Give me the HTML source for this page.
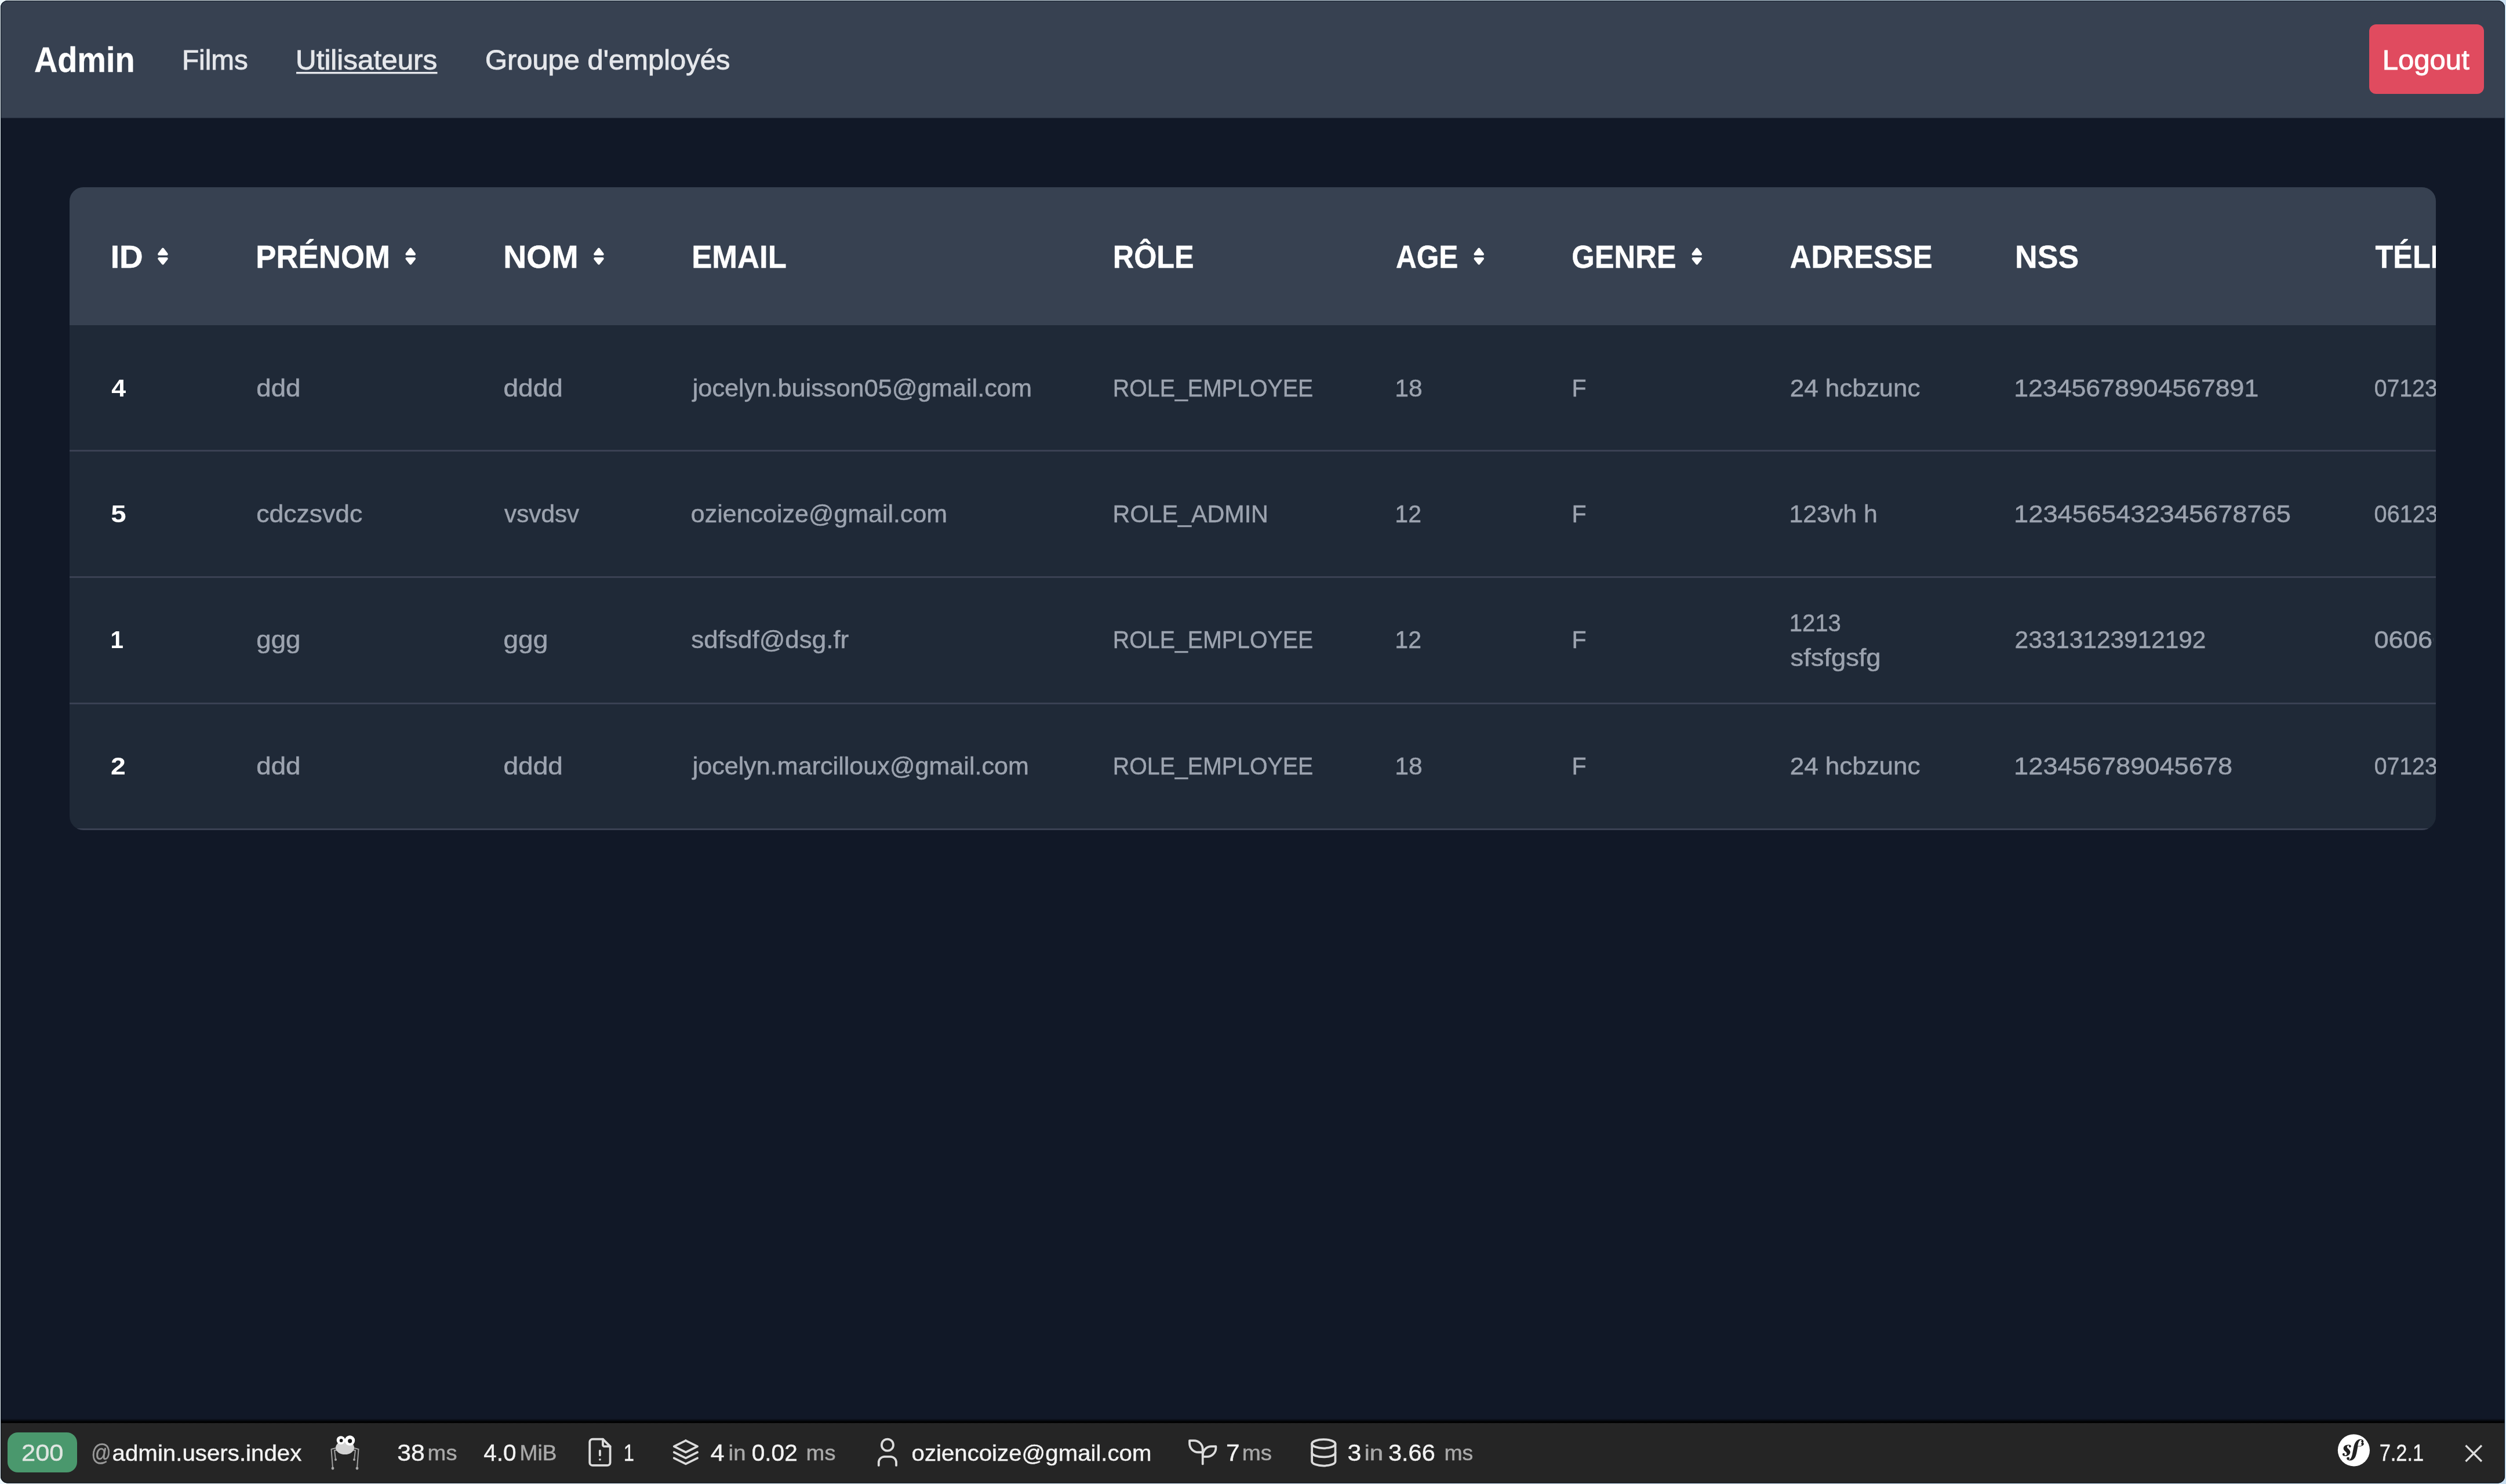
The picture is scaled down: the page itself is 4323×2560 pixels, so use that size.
<!DOCTYPE html>
<html><head><meta charset="utf-8"><title>Admin - Utilisateurs</title>
<style>html,body{margin:0;padding:0;width:4323px;height:2560px;overflow:hidden;background:#d6e8f3}</style>
</head><body>
<svg width="4323" height="2560" viewBox="0 0 4323 2560" style="display:block;will-change:transform;font-family:'Liberation Sans',sans-serif">
<defs>
<clipPath id="win"><rect x="1" y="1" width="4320" height="2557.5" rx="12" ry="12"/></clipPath>
<clipPath id="ph3"><rect x="4000" y="1000" width="198" height="200"/></clipPath>
<clipPath id="tbl"><rect x="120" y="323" width="4082" height="1109" rx="24" ry="24"/></clipPath>
<linearGradient id="tshadow" x1="0" y1="0" x2="0" y2="1"><stop offset="0" stop-color="#000" stop-opacity="0"/><stop offset="0.55" stop-color="#000" stop-opacity="0.75"/><stop offset="0.8" stop-color="#000" stop-opacity="1"/><stop offset="1" stop-color="#080808" stop-opacity="1"/></linearGradient>
<linearGradient id="desk" x1="0" y1="0" x2="1" y2="0"><stop offset="0" stop-color="#eef8fe"/><stop offset="1" stop-color="#c9dff1"/></linearGradient>
</defs>
<rect x="0" y="0" width="4323" height="2560" fill="url(#desk)"/>
<g clip-path="url(#win)">
<rect x="0" y="0" width="4323" height="2560" fill="#111827"/>
<rect x="0" y="0" width="4323" height="203.5" fill="#374151"/>
<text x="59.00" y="124.00" font-size="61.92" font-weight="bold" fill="#ffffff" stroke="#ffffff" stroke-width="0.30" textLength="173.53" lengthAdjust="spacingAndGlyphs">Admin</text>
<text x="314.02" y="119.70" font-size="48.55" font-weight="normal" fill="#e5e7eb" stroke="#e5e7eb" stroke-width="0.90" textLength="113.82" lengthAdjust="spacingAndGlyphs">Films</text>
<text x="510.03" y="119.70" font-size="48.55" font-weight="normal" fill="#e5e7eb" stroke="#e5e7eb" stroke-width="0.90" textLength="244.22" lengthAdjust="spacingAndGlyphs">Utilisateurs</text>
<rect x="511" y="124" width="243.5" height="3.4" fill="#e5e7eb"/>
<text x="836.93" y="119.70" font-size="48.55" font-weight="normal" fill="#e5e7eb" stroke="#e5e7eb" stroke-width="0.90" textLength="422.43" lengthAdjust="spacingAndGlyphs">Groupe d&#39;employés</text>
<rect x="4087" y="42" width="198" height="120" rx="12" ry="12" fill="#e04b5f"/>
<text x="4109.70" y="119.90" font-size="48.55" font-weight="normal" fill="#ffffff" stroke="#ffffff" stroke-width="0.90" textLength="150.09" lengthAdjust="spacingAndGlyphs">Logout</text>
<g clip-path="url(#tbl)">
<rect x="120" y="323" width="4082" height="1109" fill="#1f2937"/>
<rect x="120" y="323" width="4082" height="238" fill="#374151"/>
<rect x="120" y="776" width="4082" height="3" fill="#3a4153"/>
<rect x="120" y="994" width="4082" height="3" fill="#3a4153"/>
<rect x="120" y="1212" width="4082" height="3" fill="#3a4153"/>
<rect x="120" y="1429" width="4082" height="3" fill="#3a4153"/>
<text x="190.42" y="461.80" font-size="56.11" font-weight="bold" fill="#fff" stroke="#fff" stroke-width="0.40" textLength="56.39" lengthAdjust="spacingAndGlyphs">ID</text>
<path d="M280.95 429.80 L287.50 438.40 L274.40 438.40 Z" fill="#fff" stroke="#fff" stroke-width="4.4" stroke-linejoin="round"/>
<path d="M274.40 446.10 L287.50 446.10 L280.95 454.30 Z" fill="#fff" stroke="#fff" stroke-width="4.4" stroke-linejoin="round"/>
<text x="441.27" y="461.80" font-size="56.11" font-weight="bold" fill="#fff" stroke="#fff" stroke-width="0.40" textLength="231.67" lengthAdjust="spacingAndGlyphs">PRÉNOM</text>
<path d="M708.25 429.80 L714.80 438.40 L701.70 438.40 Z" fill="#fff" stroke="#fff" stroke-width="4.4" stroke-linejoin="round"/>
<path d="M701.70 446.10 L714.80 446.10 L708.25 454.30 Z" fill="#fff" stroke="#fff" stroke-width="4.4" stroke-linejoin="round"/>
<text x="868.28" y="461.80" font-size="56.11" font-weight="bold" fill="#fff" stroke="#fff" stroke-width="0.40" textLength="129.54" lengthAdjust="spacingAndGlyphs">NOM</text>
<path d="M1032.95 429.80 L1039.50 438.40 L1026.40 438.40 Z" fill="#fff" stroke="#fff" stroke-width="4.4" stroke-linejoin="round"/>
<path d="M1026.40 446.10 L1039.50 446.10 L1032.95 454.30 Z" fill="#fff" stroke="#fff" stroke-width="4.4" stroke-linejoin="round"/>
<text x="1193.18" y="461.80" font-size="56.11" font-weight="bold" fill="#fff" stroke="#fff" stroke-width="0.40" textLength="163.73" lengthAdjust="spacingAndGlyphs">EMAIL</text>
<text x="1919.83" y="461.80" font-size="56.11" font-weight="bold" fill="#fff" stroke="#fff" stroke-width="0.40" textLength="139.82" lengthAdjust="spacingAndGlyphs">RÔLE</text>
<text x="2408.07" y="461.80" font-size="56.11" font-weight="bold" fill="#fff" stroke="#fff" stroke-width="0.40" textLength="107.28" lengthAdjust="spacingAndGlyphs">AGE</text>
<path d="M2551.25 429.80 L2557.80 438.40 L2544.70 438.40 Z" fill="#fff" stroke="#fff" stroke-width="4.4" stroke-linejoin="round"/>
<path d="M2544.70 446.10 L2557.80 446.10 L2551.25 454.30 Z" fill="#fff" stroke="#fff" stroke-width="4.4" stroke-linejoin="round"/>
<text x="2711.16" y="461.80" font-size="56.11" font-weight="bold" fill="#fff" stroke="#fff" stroke-width="0.40" textLength="180.58" lengthAdjust="spacingAndGlyphs">GENRE</text>
<path d="M2927.25 429.80 L2933.80 438.40 L2920.70 438.40 Z" fill="#fff" stroke="#fff" stroke-width="4.4" stroke-linejoin="round"/>
<path d="M2920.70 446.10 L2933.80 446.10 L2927.25 454.30 Z" fill="#fff" stroke="#fff" stroke-width="4.4" stroke-linejoin="round"/>
<text x="3087.84" y="461.80" font-size="56.11" font-weight="bold" fill="#fff" stroke="#fff" stroke-width="0.40" textLength="245.76" lengthAdjust="spacingAndGlyphs">ADRESSE</text>
<text x="3476.12" y="461.80" font-size="56.11" font-weight="bold" fill="#fff" stroke="#fff" stroke-width="0.40" textLength="109.93" lengthAdjust="spacingAndGlyphs">NSS</text>
<text x="4097.55" y="461.80" font-size="56.11" font-weight="bold" fill="#fff" stroke="#fff" stroke-width="0.40" textLength="308.04" lengthAdjust="spacingAndGlyphs">TÉLÉPHONE</text>
<text x="192.26" y="683.50" font-size="41.86" font-weight="bold" fill="#ffffff" textLength="24.97" lengthAdjust="spacingAndGlyphs">4</text>
<text x="442.34" y="683.50" font-size="41.86" font-weight="normal" fill="#9ca3af" stroke="#9ca3af" stroke-width="0.50" textLength="76.11" lengthAdjust="spacingAndGlyphs">ddd</text>
<text x="868.42" y="683.50" font-size="41.86" font-weight="normal" fill="#9ca3af" stroke="#9ca3af" stroke-width="0.50" textLength="102.63" lengthAdjust="spacingAndGlyphs">dddd</text>
<text x="1194.69" y="683.50" font-size="41.86" font-weight="normal" fill="#9ca3af" stroke="#9ca3af" stroke-width="0.50" textLength="585.33" lengthAdjust="spacingAndGlyphs">jocelyn.buisson05@gmail.com</text>
<text x="1919.75" y="683.50" font-size="41.86" font-weight="normal" fill="#9ca3af" stroke="#9ca3af" stroke-width="0.50" textLength="345.56" lengthAdjust="spacingAndGlyphs">ROLE_EMPLOYEE</text>
<text x="2406.22" y="683.50" font-size="41.86" font-weight="normal" fill="#9ca3af" stroke="#9ca3af" stroke-width="0.50" textLength="47.56" lengthAdjust="spacingAndGlyphs">18</text>
<text x="2711.61" y="683.50" font-size="41.86" font-weight="normal" fill="#9ca3af" stroke="#9ca3af" stroke-width="0.50" textLength="25.06" lengthAdjust="spacingAndGlyphs">F</text>
<text x="3087.75" y="683.50" font-size="41.86" font-weight="normal" fill="#9ca3af" stroke="#9ca3af" stroke-width="0.50" textLength="224.69" lengthAdjust="spacingAndGlyphs">24 hcbzunc</text>
<text x="3474.17" y="683.50" font-size="41.86" font-weight="normal" fill="#9ca3af" stroke="#9ca3af" stroke-width="0.50" textLength="422.08" lengthAdjust="spacingAndGlyphs">12345678904567891</text>
<text x="4095.64" y="683.50" font-size="41.86" font-weight="normal" fill="#9ca3af" stroke="#9ca3af" stroke-width="0.50" textLength="218.26" lengthAdjust="spacingAndGlyphs">0712345678</text>
<text x="191.38" y="901.00" font-size="41.86" font-weight="bold" fill="#ffffff" textLength="26.41" lengthAdjust="spacingAndGlyphs">5</text>
<text x="442.39" y="901.00" font-size="41.86" font-weight="normal" fill="#9ca3af" stroke="#9ca3af" stroke-width="0.50" textLength="182.93" lengthAdjust="spacingAndGlyphs">cdczsvdc</text>
<text x="870.10" y="901.00" font-size="41.86" font-weight="normal" fill="#9ca3af" stroke="#9ca3af" stroke-width="0.50" textLength="129.15" lengthAdjust="spacingAndGlyphs">vsvdsv</text>
<text x="1191.85" y="901.00" font-size="41.86" font-weight="normal" fill="#9ca3af" stroke="#9ca3af" stroke-width="0.50" textLength="442.28" lengthAdjust="spacingAndGlyphs">oziencoize@gmail.com</text>
<text x="1919.59" y="901.00" font-size="41.86" font-weight="normal" fill="#9ca3af" stroke="#9ca3af" stroke-width="0.50" textLength="268.36" lengthAdjust="spacingAndGlyphs">ROLE_ADMIN</text>
<text x="2406.36" y="901.00" font-size="41.86" font-weight="normal" fill="#9ca3af" stroke="#9ca3af" stroke-width="0.50" textLength="45.59" lengthAdjust="spacingAndGlyphs">12</text>
<text x="2711.61" y="901.00" font-size="41.86" font-weight="normal" fill="#9ca3af" stroke="#9ca3af" stroke-width="0.50" textLength="25.06" lengthAdjust="spacingAndGlyphs">F</text>
<text x="3086.52" y="901.00" font-size="41.86" font-weight="normal" fill="#9ca3af" stroke="#9ca3af" stroke-width="0.50" textLength="152.22" lengthAdjust="spacingAndGlyphs">123vh h</text>
<text x="3474.13" y="901.00" font-size="41.86" font-weight="normal" fill="#9ca3af" stroke="#9ca3af" stroke-width="0.50" textLength="477.81" lengthAdjust="spacingAndGlyphs">1234565432345678765</text>
<text x="4095.62" y="901.00" font-size="41.86" font-weight="normal" fill="#9ca3af" stroke="#9ca3af" stroke-width="0.50" textLength="220.58" lengthAdjust="spacingAndGlyphs">0612345678</text>
<text x="190.38" y="1117.80" font-size="41.86" font-weight="bold" fill="#ffffff" textLength="22.50" lengthAdjust="spacingAndGlyphs">1</text>
<text x="442.34" y="1117.80" font-size="41.86" font-weight="normal" fill="#9ca3af" stroke="#9ca3af" stroke-width="0.50" textLength="76.11" lengthAdjust="spacingAndGlyphs">ggg</text>
<text x="868.42" y="1117.80" font-size="41.86" font-weight="normal" fill="#9ca3af" stroke="#9ca3af" stroke-width="0.50" textLength="76.86" lengthAdjust="spacingAndGlyphs">ggg</text>
<text x="1192.33" y="1117.80" font-size="41.86" font-weight="normal" fill="#9ca3af" stroke="#9ca3af" stroke-width="0.50" textLength="271.93" lengthAdjust="spacingAndGlyphs">sdfsdf@dsg.fr</text>
<text x="1919.75" y="1117.80" font-size="41.86" font-weight="normal" fill="#9ca3af" stroke="#9ca3af" stroke-width="0.50" textLength="345.56" lengthAdjust="spacingAndGlyphs">ROLE_EMPLOYEE</text>
<text x="2406.36" y="1117.80" font-size="41.86" font-weight="normal" fill="#9ca3af" stroke="#9ca3af" stroke-width="0.50" textLength="45.59" lengthAdjust="spacingAndGlyphs">12</text>
<text x="2711.61" y="1117.80" font-size="41.86" font-weight="normal" fill="#9ca3af" stroke="#9ca3af" stroke-width="0.50" textLength="25.06" lengthAdjust="spacingAndGlyphs">F</text>
<text x="3086.73" y="1089.20" font-size="41.86" font-weight="normal" fill="#9ca3af" stroke="#9ca3af" stroke-width="0.50" textLength="89.18" lengthAdjust="spacingAndGlyphs">1213</text>
<text x="3088.49" y="1149.10" font-size="41.86" font-weight="normal" fill="#9ca3af" stroke="#9ca3af" stroke-width="0.50" textLength="156.08" lengthAdjust="spacingAndGlyphs">sfsfgsfg</text>
<text x="3475.62" y="1117.80" font-size="41.86" font-weight="normal" fill="#9ca3af" stroke="#9ca3af" stroke-width="0.50" textLength="329.82" lengthAdjust="spacingAndGlyphs">23313123912192</text>
<g clip-path="url(#ph3)">
<text x="4095.42" y="1117.80" font-size="41.86" font-weight="normal" fill="#9ca3af" stroke="#9ca3af" stroke-width="0.50" textLength="251.92" lengthAdjust="spacingAndGlyphs">0606060606</text>
</g>
<text x="191.14" y="1335.80" font-size="41.86" font-weight="bold" fill="#ffffff" textLength="25.77" lengthAdjust="spacingAndGlyphs">2</text>
<text x="442.34" y="1335.80" font-size="41.86" font-weight="normal" fill="#9ca3af" stroke="#9ca3af" stroke-width="0.50" textLength="76.11" lengthAdjust="spacingAndGlyphs">ddd</text>
<text x="868.42" y="1335.80" font-size="41.86" font-weight="normal" fill="#9ca3af" stroke="#9ca3af" stroke-width="0.50" textLength="102.63" lengthAdjust="spacingAndGlyphs">dddd</text>
<text x="1194.68" y="1335.80" font-size="41.86" font-weight="normal" fill="#9ca3af" stroke="#9ca3af" stroke-width="0.50" textLength="580.21" lengthAdjust="spacingAndGlyphs">jocelyn.marcilloux@gmail.com</text>
<text x="1919.75" y="1335.80" font-size="41.86" font-weight="normal" fill="#9ca3af" stroke="#9ca3af" stroke-width="0.50" textLength="345.56" lengthAdjust="spacingAndGlyphs">ROLE_EMPLOYEE</text>
<text x="2406.22" y="1335.80" font-size="41.86" font-weight="normal" fill="#9ca3af" stroke="#9ca3af" stroke-width="0.50" textLength="47.56" lengthAdjust="spacingAndGlyphs">18</text>
<text x="2711.61" y="1335.80" font-size="41.86" font-weight="normal" fill="#9ca3af" stroke="#9ca3af" stroke-width="0.50" textLength="25.06" lengthAdjust="spacingAndGlyphs">F</text>
<text x="3087.75" y="1335.80" font-size="41.86" font-weight="normal" fill="#9ca3af" stroke="#9ca3af" stroke-width="0.50" textLength="224.69" lengthAdjust="spacingAndGlyphs">24 hcbzunc</text>
<text x="3474.13" y="1335.80" font-size="41.86" font-weight="normal" fill="#9ca3af" stroke="#9ca3af" stroke-width="0.50" textLength="376.95" lengthAdjust="spacingAndGlyphs">123456789045678</text>
<text x="4095.64" y="1335.80" font-size="41.86" font-weight="normal" fill="#9ca3af" stroke="#9ca3af" stroke-width="0.50" textLength="218.26" lengthAdjust="spacingAndGlyphs">0712345678</text>
</g>
<rect x="0" y="2447" width="4323" height="8" fill="url(#tshadow)"/>
<rect x="0" y="2455" width="4323" height="110" fill="#252525"/>
<rect x="13" y="2471" width="120" height="69" rx="18" ry="18" fill="#4a986d"/>
<text x="37.09" y="2520.00" font-size="40.70" font-weight="normal" fill="#dfe6e1" stroke="#dfe6e1" stroke-width="0.45" textLength="72.44" lengthAdjust="spacingAndGlyphs">200</text>
<text x="157.14" y="2520.00" font-size="40.70" font-weight="normal" fill="#999999" stroke="#999999" stroke-width="0.50" textLength="34.53" lengthAdjust="spacingAndGlyphs">@</text>
<text x="193.57" y="2519.80" font-size="38.66" font-weight="normal" fill="#f2f2f2" stroke="#f2f2f2" stroke-width="0.45" textLength="326.79" lengthAdjust="spacingAndGlyphs">admin.users.index</text>
<g fill="none" stroke="#a0a0a0" stroke-width="2" stroke-linejoin="round" stroke-linecap="round">
<path d="M583 2497 L571.5 2500 L574 2533"/>
<path d="M585 2501 L577 2502 L579 2518"/>
<path d="M607 2497 L618.5 2500 L616 2533"/>
<path d="M605 2501 L613 2502 L611 2518"/>
</g>
<g fill="#a8a8a8"><circle cx="574" cy="2533" r="2.4"/><circle cx="616" cy="2533" r="2.4"/><circle cx="579" cy="2518" r="2"/><circle cx="611" cy="2518" r="2"/></g>
<ellipse cx="595" cy="2497.5" rx="16" ry="11.5" fill="#d2d2d2"/>
<circle cx="588" cy="2484.5" r="7.3" fill="#fff"/><circle cx="603.5" cy="2485" r="8.7" fill="#fff"/>
<circle cx="588.6" cy="2485" r="2.9" fill="#151515"/><circle cx="603.7" cy="2485.8" r="3.6" fill="#151515"/>
<text x="685.25" y="2520.00" font-size="40.70" font-weight="normal" fill="#f2f2f2" stroke="#f2f2f2" stroke-width="0.45" textLength="47.58" lengthAdjust="spacingAndGlyphs">38</text>
<text x="737.62" y="2519.30" font-size="37.79" font-weight="normal" fill="#a9a9a9" stroke="#a9a9a9" stroke-width="0.50" textLength="50.86" lengthAdjust="spacingAndGlyphs">ms</text>
<text x="834.13" y="2520.00" font-size="40.70" font-weight="normal" fill="#f2f2f2" stroke="#f2f2f2" stroke-width="0.45" textLength="56.39" lengthAdjust="spacingAndGlyphs">4.0</text>
<text x="896.60" y="2519.30" font-size="37.79" font-weight="normal" fill="#a9a9a9" stroke="#a9a9a9" stroke-width="0.50" textLength="63.82" lengthAdjust="spacingAndGlyphs">MiB</text>
<g transform="translate(1004.7 2475) scale(2.52)" fill="none" stroke="#dcdcdc" stroke-width="1.5" stroke-linecap="round" stroke-linejoin="round">
<path d="M14 3v4a1 1 0 0 0 1 1h4"/>
<path d="M17 21h-10a2 2 0 0 1 -2 -2v-14a2 2 0 0 1 2 -2h7l5 5v11a2 2 0 0 1 -2 2z"/>
<path d="M12 17l.01 0"/>
<path d="M12 11l0 3"/>
</g>
<text x="1075.82" y="2520.00" font-size="40.70" font-weight="normal" fill="#f2f2f2" stroke="#f2f2f2" stroke-width="0.45" textLength="18.20" lengthAdjust="spacingAndGlyphs">1</text>
<g transform="translate(1152.7 2475) scale(2.52)" fill="none" stroke="#dcdcdc" stroke-width="1.5" stroke-linecap="round" stroke-linejoin="round">
<path d="M12 4l-8 4l8 4l8 -4l-8 -4"/>
<path d="M4 12l8 4l8 -4"/>
<path d="M4 16l8 4l8 -4"/>
</g>
<text x="1225.87" y="2520.00" font-size="40.70" font-weight="normal" fill="#f2f2f2" stroke="#f2f2f2" stroke-width="0.45" textLength="23.82" lengthAdjust="spacingAndGlyphs">4</text>
<text x="1256.61" y="2519.30" font-size="37.79" font-weight="normal" fill="#a9a9a9" stroke="#a9a9a9" stroke-width="0.50" textLength="29.86" lengthAdjust="spacingAndGlyphs">in</text>
<text x="1296.63" y="2520.00" font-size="40.70" font-weight="normal" fill="#f2f2f2" stroke="#f2f2f2" stroke-width="0.45" textLength="79.16" lengthAdjust="spacingAndGlyphs">0.02</text>
<text x="1390.62" y="2519.30" font-size="37.79" font-weight="normal" fill="#a9a9a9" stroke="#a9a9a9" stroke-width="0.50" textLength="50.86" lengthAdjust="spacingAndGlyphs">ms</text>
<g transform="translate(1500.7 2475) scale(2.52)" fill="none" stroke="#dcdcdc" stroke-width="1.5" stroke-linecap="round" stroke-linejoin="round">
<path d="M8 7a4 4 0 1 0 8 0a4 4 0 0 0 -8 0"/>
<path d="M6 21v-2a4 4 0 0 1 4 -4h4a4 4 0 0 1 4 4v2"/>
</g>
<text x="1572.57" y="2519.80" font-size="38.66" font-weight="normal" fill="#f2f2f2" stroke="#f2f2f2" stroke-width="0.45" textLength="413.90" lengthAdjust="spacingAndGlyphs">oziencoize@gmail.com</text>
<g transform="translate(2044.5 2475) scale(2.52)" fill="none" stroke="#dcdcdc" stroke-width="1.5" stroke-linecap="round" stroke-linejoin="round">
<path d="M12 10a6 6 0 0 0 -6 -6h-3v2a6 6 0 0 0 6 6h3"/>
<path d="M12 14a6 6 0 0 1 6 -6h3v1a6 6 0 0 1 -6 6h-3"/>
<path d="M12 20l0 -10"/>
</g>
<text x="2115.04" y="2520.00" font-size="40.70" font-weight="normal" fill="#f2f2f2" stroke="#f2f2f2" stroke-width="0.45" textLength="23.63" lengthAdjust="spacingAndGlyphs">7</text>
<text x="2142.70" y="2519.30" font-size="37.79" font-weight="normal" fill="#a9a9a9" stroke="#a9a9a9" stroke-width="0.50" textLength="51.29" lengthAdjust="spacingAndGlyphs">ms</text>
<g transform="translate(2253.1 2475.6) scale(2.52)" fill="none" stroke="#dcdcdc" stroke-width="1.5" stroke-linecap="round" stroke-linejoin="round">
<path d="M12 6m-8 0a8 3 0 1 0 16 0a8 3 0 1 0 -16 0"/>
<path d="M4 6v6a8 3 0 0 0 16 0v-6"/>
<path d="M4 12v6a8 3 0 0 0 16 0v-6"/>
</g>
<text x="2324.64" y="2520.00" font-size="40.70" font-weight="normal" fill="#f2f2f2" stroke="#f2f2f2" stroke-width="0.45" textLength="23.88" lengthAdjust="spacingAndGlyphs">3</text>
<text x="2353.47" y="2519.30" font-size="37.79" font-weight="normal" fill="#a9a9a9" stroke="#a9a9a9" stroke-width="0.50" textLength="32.62" lengthAdjust="spacingAndGlyphs">in</text>
<text x="2394.90" y="2520.00" font-size="40.70" font-weight="normal" fill="#f2f2f2" stroke="#f2f2f2" stroke-width="0.45" textLength="80.87" lengthAdjust="spacingAndGlyphs">3.66</text>
<text x="2491.38" y="2519.30" font-size="37.79" font-weight="normal" fill="#a9a9a9" stroke="#a9a9a9" stroke-width="0.50" textLength="49.78" lengthAdjust="spacingAndGlyphs">ms</text>
<circle cx="4060.4" cy="2501.8" r="27.6" fill="#ffffff"/>
<path transform="translate(4025.6 2472.65) scale(2.75 2.55)" d="M18.2 6.2c-.5 0-.9-.3-.9-.8 0-.2 0-.3.1-.4.1-.2.2-.2.2-.3 0-.2-.3-.2-.4-.2-1.1 0-1.5 1.5-1.9 3.1l-.2.9c1.1.2 1.9 0 2.3-.3.6-.4-.2-.8-.1-1.3.1-.5.5-.7.9-.7.5 0 .8.5.8.9 0 .7-1 1.8-3 1.8-.2 0-.6 0-.8-.1l-.5 2.9c-.3 1.8-.6 3.4-1.2 4.5-.9 1.6-2 2.2-3.1 2.2-.8 0-2.2-.4-2.2-1.5 0-.5.5-.9.9-.9.5 0 .9.4.9.9 0 .5-.5.5-.5.7 0 .1.1.2.2.2 1 0 1.7-2 2-3.5l.8-4.5c.2-.9.3-1.7.6-2.4.8-2.1 2.1-3.4 3.6-3.4 1 0 2.1.5 2.1 1.6 0 .5-.5.9-.9.9z" fill="#222"/>
<path transform="translate(4025.7 2475.55) scale(2.45 2.35)" d="M9.8 9.4c.7 1.1 1.9 1.8 1.9 3 0 1.6-1.3 3.1-3.7 3.1-1 0-1.8-.6-1.8-1.3 0-.5.4-.9.9-.9.5 0 .7.4.7.8 0 .3-.2.4-.2.6 0 .1.3.2.4.2.7 0 1.3-.3 1.3-1.2 0-1.3-2.4-2-2.4-3.9 0-1.5 1.5-2.7 3.5-2.7.8 0 1.9.3 1.9 1.1 0 .5-.4.9-.8.9-.4 0-.8-.2-.8-.7 0-.4.2-.4.2-.6 0-.1-.2-.2-.4-.2-.6 0-1.1.4-1.1 1.1 0 .5.3.8.6 1.2z" fill="#222"/>
<text x="4104.63" y="2520.00" font-size="40.70" font-weight="normal" fill="#f2f2f2" stroke="#f2f2f2" stroke-width="0.45" textLength="76.63" lengthAdjust="spacingAndGlyphs">7.2.1</text>
<path d="M4253.5 2493.5 L4281 2521 M4281 2493.5 L4253.5 2521" stroke="#dddddd" stroke-width="3.2" stroke-linecap="butt"/>
</g>
<rect x="1.5" y="1.5" width="4319" height="2556.5" rx="11.5" ry="11.5" fill="none" stroke="#000a14" stroke-opacity="0.8" stroke-width="1"/>
</svg>
</body></html>
